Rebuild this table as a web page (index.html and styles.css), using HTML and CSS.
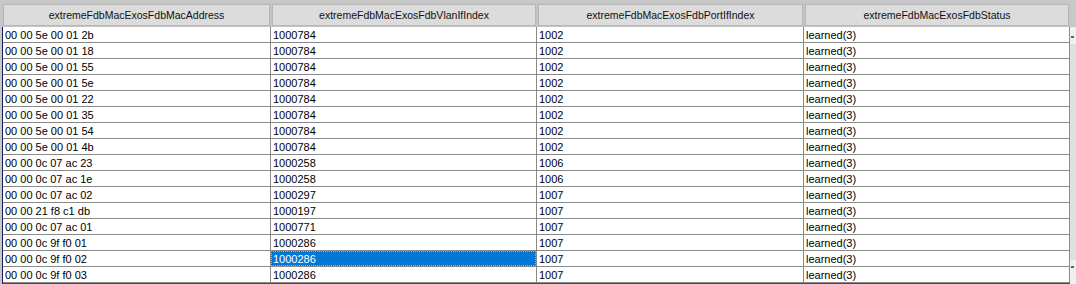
FILE: index.html
```html
<!DOCTYPE html>
<html>
<head>
<meta charset="utf-8">
<link rel="stylesheet" href="styles.css">
</head>
<body>
<div class="frame">
  <div class="table">
    <div class="head">
      <div class="hcell c1"><span>extremeFdbMacExosFdbMacAddress</span></div>
      <div class="hcell c2"><span>extremeFdbMacExosFdbVlanIfIndex</span></div>
      <div class="hcell c3"><span>extremeFdbMacExosFdbPortIfIndex</span></div>
      <div class="hcell c4"><span>extremeFdbMacExosFdbStatus</span></div>
    </div>
    <div class="body">
      <div class="row"><div class="cell">00 00 5e 00 01 2b</div><div class="cell">1000784</div><div class="cell">1002</div><div class="cell">learned(3)</div></div>
      <div class="row"><div class="cell">00 00 5e 00 01 18</div><div class="cell">1000784</div><div class="cell">1002</div><div class="cell">learned(3)</div></div>
      <div class="row"><div class="cell">00 00 5e 00 01 55</div><div class="cell">1000784</div><div class="cell">1002</div><div class="cell">learned(3)</div></div>
      <div class="row"><div class="cell">00 00 5e 00 01 5e</div><div class="cell">1000784</div><div class="cell">1002</div><div class="cell">learned(3)</div></div>
      <div class="row"><div class="cell">00 00 5e 00 01 22</div><div class="cell">1000784</div><div class="cell">1002</div><div class="cell">learned(3)</div></div>
      <div class="row"><div class="cell">00 00 5e 00 01 35</div><div class="cell">1000784</div><div class="cell">1002</div><div class="cell">learned(3)</div></div>
      <div class="row"><div class="cell">00 00 5e 00 01 54</div><div class="cell">1000784</div><div class="cell">1002</div><div class="cell">learned(3)</div></div>
      <div class="row"><div class="cell">00 00 5e 00 01 4b</div><div class="cell">1000784</div><div class="cell">1002</div><div class="cell">learned(3)</div></div>
      <div class="row"><div class="cell">00 00 0c 07 ac 23</div><div class="cell">1000258</div><div class="cell">1006</div><div class="cell">learned(3)</div></div>
      <div class="row"><div class="cell">00 00 0c 07 ac 1e</div><div class="cell">1000258</div><div class="cell">1006</div><div class="cell">learned(3)</div></div>
      <div class="row"><div class="cell">00 00 0c 07 ac 02</div><div class="cell">1000297</div><div class="cell">1007</div><div class="cell">learned(3)</div></div>
      <div class="row"><div class="cell">00 00 21 f8 c1 db</div><div class="cell">1000197</div><div class="cell">1007</div><div class="cell">learned(3)</div></div>
      <div class="row"><div class="cell">00 00 0c 07 ac 01</div><div class="cell">1000771</div><div class="cell">1007</div><div class="cell">learned(3)</div></div>
      <div class="row"><div class="cell">00 00 0c 9f f0 01</div><div class="cell">1000286</div><div class="cell">1007</div><div class="cell">learned(3)</div></div>
      <div class="row"><div class="cell">00 00 0c 9f f0 02</div><div class="cell selected"><span class="focus">1000286</span></div><div class="cell">1007</div><div class="cell">learned(3)</div></div>
      <div class="row"><div class="cell">00 00 0c 9f f0 03</div><div class="cell">1000286</div><div class="cell">1007</div><div class="cell">learned(3)</div></div>
    </div>
  </div>
  <div class="scroll">
    <div class="sb-top"></div>
    <div class="sb-btn"><span class="tick"></span></div>
    <div class="sb-track"></div>
    <div class="sb-btn bottom"><span class="tick"></span></div>
  </div>
</div>
</body>
</html>
```

FILE: styles.css
```css
html, body {
  margin: 0;
  padding: 0;
}
body {
  background: #c8c8c8;
  font-family: "Liberation Sans", Arial, sans-serif;
  font-size: 11px;
  color: #000;
  overflow: hidden;
  width: 1076px;
  height: 284px;
}
.frame {
  display: flex;
  padding-top: 3px;
  padding-left: 2px;
}
.table {
  width: 1068px;
}
.head {
  display: grid;
  grid-template-columns: 269px 266px 267px 266px;
  height: 24px;
  background: #c4c4c4;
}
.hcell {
  margin: 1px;
  border: 1px solid #b8b8b8;
  background: #dcdcdc;
  display: flex;
  align-items: center;
  justify-content: center;
  font-size: 10.5px;
  color: #111;
}
.body {
  border-left: 1px solid #1a1a60;
  border-bottom: 1px solid #2244c8;
  background: #fff;
}
.row {
  display: grid;
  grid-template-columns: 268px 266px 267px 266px;
  height: 16px;
  box-sizing: border-box;
  border-bottom: 1px solid #8a8a8a;
}
.cell {
  border-right: 1px solid #8a8a8a;
  padding-left: 2px;
  padding-top: 1px;
  line-height: 14px;
  white-space: nowrap;
  overflow: hidden;
  background: #fff;
}
.cell.selected {
  background: #0078d7;
  color: #fff;
  padding: 0;
}
.focus {
  display: block;
  height: 13px;
  line-height: 14px;
  padding-left: 1px;
  border: 1px dotted #f0a040;
}
.scroll {
  width: 6px;
  display: flex;
  flex-direction: column;
}
.sb-top {
  height: 24px;
  background: #c8c8c8;
}
.sb-btn {
  height: 17px;
  background: #f0f0f0;
  position: relative;
}
.sb-btn.bottom {
  height: 24px;
}
.tick {
  position: absolute;
  left: 1px;
  top: 9px;
  width: 3px;
  height: 2px;
  background: #606060;
}
.sb-btn.bottom .tick {
  top: 6px;
}
.sb-track {
  flex: 1;
  background: #e0e0e0;
}
```
